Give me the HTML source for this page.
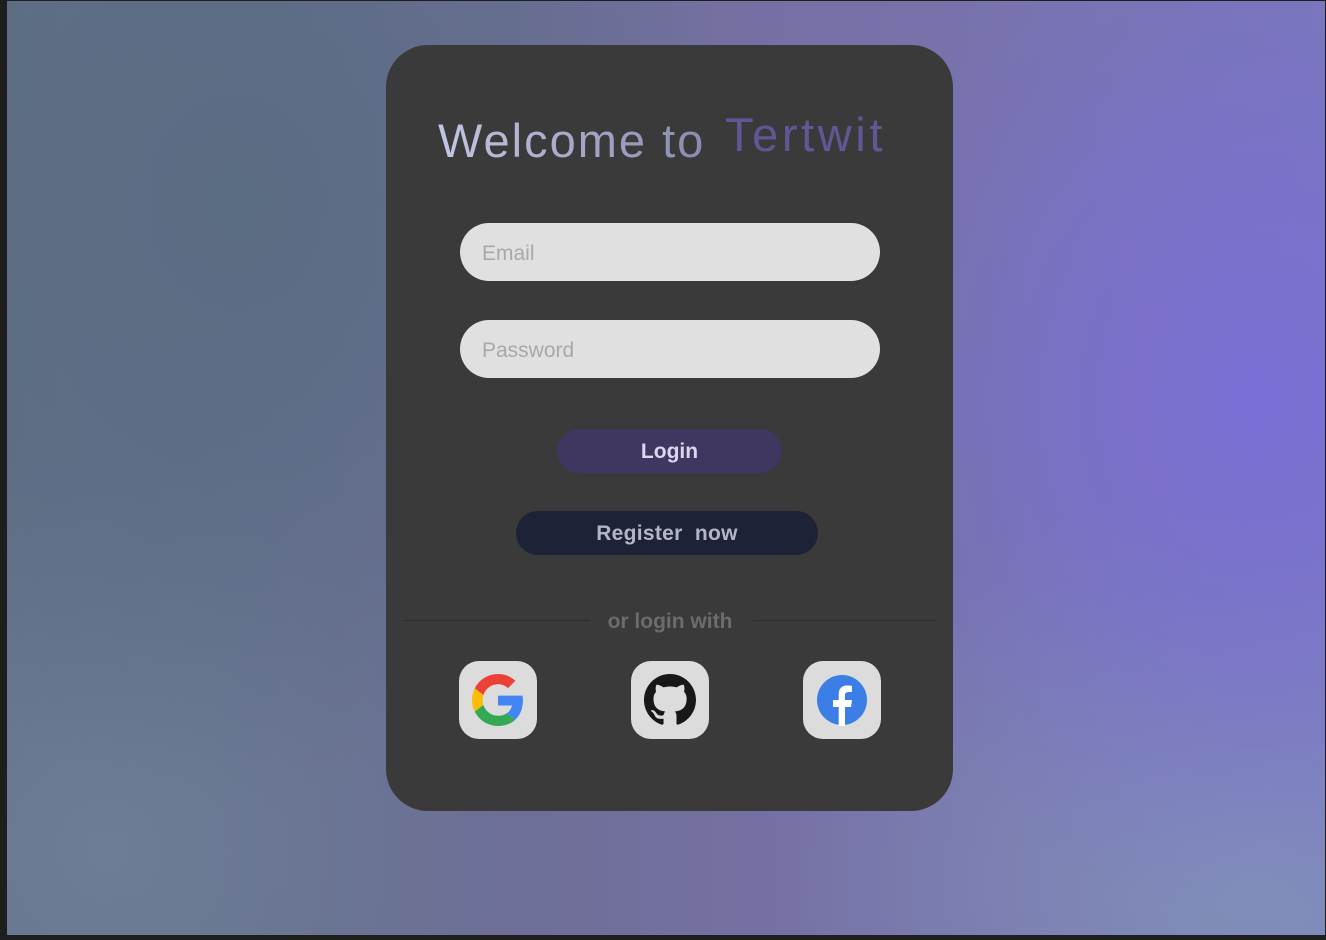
<!DOCTYPE html>
<html><head><meta charset="utf-8"><style>
*{margin:0;padding:0;box-sizing:border-box}
html,body{width:1326px;height:940px;overflow:hidden;background:#1e1e1e;font-family:"Liberation Sans",sans-serif}
#bg{position:absolute;left:7px;top:1px;width:1318px;height:934px;
background:
radial-gradient(ellipse 420px 520px at 1250px 400px,rgba(122,110,215,0.95),rgba(122,110,215,0) 100%),
radial-gradient(ellipse 500px 400px at 1250px 880px,rgba(130,145,185,0.9),rgba(130,145,185,0) 100%),
radial-gradient(ellipse 500px 600px at 230px 200px,rgba(90,108,130,1),rgba(90,108,130,0) 100%),
radial-gradient(ellipse 400px 400px at 100px 850px,rgba(110,125,150,1),rgba(110,125,150,0) 100%),
linear-gradient(90deg,#5f6f86 0%,#6e6f98 40%,#7670a5 60%,#7a78b8 100%);}
.card{position:absolute;left:386px;top:45px;width:567px;height:766px;border-radius:42px;background:#3a3a3a}
.abs{position:absolute}
.t1{left:438px;top:113px;font-size:47px;letter-spacing:2px;background:linear-gradient(90deg,#c3c6e2,#8a8bb0);-webkit-background-clip:text;color:transparent;white-space:nowrap}
.t2{left:725px;top:107px;font-size:47px;letter-spacing:3.6px;color:#5f5895;white-space:nowrap}
.inp{left:460px;width:420px;height:58px;border-radius:29px;background:#e0e0e0;color:#a8a8a8;font-size:21px;padding-left:22px;padding-top:2px;line-height:58px}
.btn{border-radius:22px;text-align:center;font-weight:bold;font-size:21px;padding-top:2px}
.line{height:1px;background:#2c2c2c;top:620px}
.ic{top:661px;width:78px;height:78px;border-radius:20px;background:#dcdcdc;display:flex;align-items:center;justify-content:center}
</style></head><body>
<div id="bg"></div>
<div class="card"></div>
<div class="abs t1">Welcome to</div>
<div class="abs t2">Tertwit</div>
<div class="abs inp" style="top:223px">Email</div>
<div class="abs inp" style="top:320px">Password</div>
<div class="abs btn" style="left:557px;top:429px;width:225px;height:44px;line-height:42px;background:#3f3760;color:#dcd6ee">Login</div>
<div class="abs btn" style="left:516px;top:511px;width:302px;height:44px;line-height:42px;background:#1d2236;color:#b4b6c6;letter-spacing:0.3px">Register&nbsp; now</div>
<div class="abs line" style="left:404px;width:186px"></div>
<div class="abs line" style="left:753px;width:183px"></div>
<div class="abs" style="left:580px;top:610px;width:180px;text-align:center;font-size:21px;font-weight:bold;color:#6c6c6c">or login with</div>
<div class="abs ic" style="left:459px">
<svg width="52" height="52" viewBox="0 0 48 48"><path fill="#EA4335" d="M24 9.5c3.54 0 6.71 1.22 9.21 3.6l6.850-6.85C35.9 2.38 30.47 0 24 0 14.62 0 6.51 5.38 2.56 13.22l7.98 6.19C12.43 13.72 17.74 9.5 24 9.5z"/><path fill="#4285F4" d="M46.98 24.55c0-1.57-.15-3.09-.38-4.55H24v9.02h12.94c-.58 2.96-2.26 5.48-4.78 7.18l7.730 6c4.510-4.18 7.090-10.36 7.090-17.65z"/><path fill="#FBBC05" d="M10.53 28.59c-.48-1.45-.76-2.99-.76-4.59s.27-3.14.76-4.59l-7.98-6.19C.92 16.46 0 20.12 0 24c0 3.88.92 7.54 2.56 10.78l7.97-6.19z"/><path fill="#34A853" d="M24 48c6.48 0 11.93-2.13 15.89-5.81l-7.73-6c-2.15 1.45-4.92 2.3-8.16 2.3-6.26 0-11.57-4.22-13.47-9.91l-7.98 6.19C6.51 42.62 14.62 48 24 48z"/></svg></div>
<div class="abs ic" style="left:631px">
<svg width="52" height="52" viewBox="0 0 16 16"><path fill="#181818" d="M8 0C3.58 0 0 3.58 0 8c0 3.54 2.29 6.53 5.47 7.59.4.07.55-.17.55-.38 0-.19-.01-.82-.01-1.49-2.01.37-2.530-.49-2.690-.94-.09-.23-.48-.94-.82-1.13-.28-.15-.68-.52-.01-.53.63-.01 1.08.58 1.23.82.72 1.21 1.87.87 2.33.66.07-.52.28-.87.51-1.07-1.78-.2-3.64-.89-3.64-3.95 0-.87.31-1.59.82-2.15-.08-.2-.36-1.02.08-2.12 0 0 .67-.21 2.2.82.64-.18 1.32-.27 2-.27.68 0 1.36.09 2 .27 1.53-1.04 2.2-.82 2.2-.82.44 1.1.16 1.92.08 2.12.51.56.82 1.27.82 2.15 0 3.07-1.87 3.75-3.65 3.95.29.25.54.73.54 1.48 0 1.07-.01 1.93-.01 2.2 0 .21.15.46.55.38A8.013 8.013 0 0016 8c0-4.42-3.58-8-8-8z"/></svg></div>
<div class="abs ic" style="left:803px">
<svg width="52" height="52" viewBox="0 0 52 52"><circle cx="26" cy="26" r="25" fill="#3b7ee6"/><path fill="#fff" d="M29 52V33h6l1-7h-7v-4.5c0-2 .7-3.5 3.6-3.5H36v-6.2c-.7-.1-2.8-.3-5-.3-5 0-8.3 3-8.3 8.5V26H17v7h5.7v19z"/></svg></div>
</body></html>
